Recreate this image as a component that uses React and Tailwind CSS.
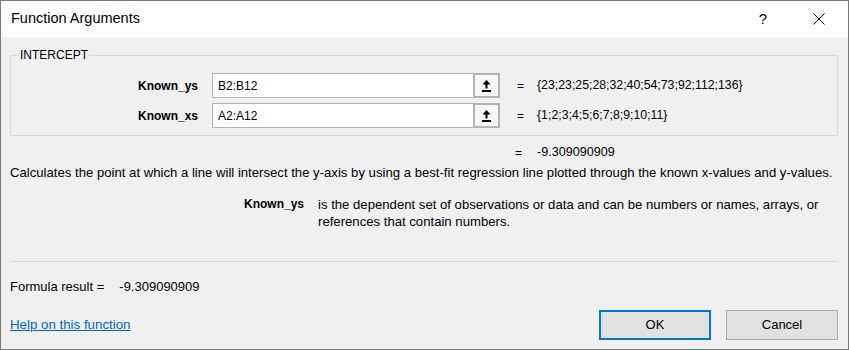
import React from 'react';

const UploadIcon = () => (
  <svg width="9" height="12" viewBox="0 0 9 12" fill="#000">
    <path d="M4.5 0 L8.5 4.5 H5.5 V8.5 H3.5 V4.5 H0.5 Z" />
    <rect x="0" y="10" width="9" height="2" />
  </svg>
);

function ArgRow({ label, value, result }) {
  return (
    <div className="flex items-center h-[25px]">
      <div className="w-[187px] text-right font-bold text-[12px]">{label}</div>
      <div className="ml-[14px] flex h-[25px]">
        <div className="w-[261px] h-full bg-white border border-[#b4b4b4] border-r-0 flex items-center pl-[5px] text-[12px]">
          {value}
        </div>
        <div className="w-[27px] h-full border-2 border-[#b4b4b4] bg-[#f7f7f7] flex items-center justify-center">
          <UploadIcon />
        </div>
      </div>
      <span className="ml-[17px] text-[12px]">=</span>
      <span className="ml-[13px] text-[12.3px]">{result}</span>
    </div>
  );
}

export default function App() {
  return (
    <div
      className="w-[849px] h-[350px] border border-[#7a7a7a] flex flex-col bg-[#f0f0f0] text-black"
      style={{ fontFamily: '"Liberation Sans", Arial, sans-serif' }}
    >
      {/* Title bar */}
      <div className="h-[36px] bg-white flex items-center pl-[10px] pr-[23px] shrink-0">
        <span className="text-[14.5px] flex-1">Function Arguments</span>
        <span className="text-[15px] mr-[46px]">?</span>
        <svg width="12" height="12" viewBox="0 0 12 12" stroke="#000" strokeWidth="1">
          <path d="M0.5 0.5 L11.5 11.5 M11.5 0.5 L0.5 11.5" />
        </svg>
      </div>

      <div className="flex-1 flex flex-col pl-[9px] pr-[10px]">
        {/* Group box */}
        <div className="relative mt-[18px] h-[81px] border border-[#dcdcdc]">
          <span className="absolute left-[8px] -top-[9px] px-[1px] bg-[#f0f0f0] text-[12px] leading-[16px]">
            INTERCEPT
          </span>
          <div className="mt-[17px] flex flex-col gap-[5px]">
            <ArgRow label="Known_ys" value="B2:B12" result="{23;23;25;28;32;40;54;73;92;112;136}" />
            <ArgRow label="Known_xs" value="A2:A12" result="{1;2;3;4;5;6;7;8;9;10;11}" />
          </div>
        </div>

        {/* Function result */}
        <div className="mt-[8px] h-[17px] flex items-center text-[12px]">
          <span className="ml-[505px]">=</span>
          <span className="ml-[15px] text-[12.6px]">-9.309090909</span>
        </div>

        <div className="mt-[3px] leading-[17px] text-[13.15px] whitespace-nowrap">
          Calculates the point at which a line will intersect the y-axis by using a best-fit regression line plotted through the known x-values and y-values.
        </div>

        <div className="mt-[15px] flex leading-[17px]">
          <div className="w-[294px] text-right font-bold text-[12px]">Known_ys</div>
          <div className="ml-[14px] w-[514px] text-[13.15px]">
            is the dependent set of observations or data and can be numbers or names, arrays, or references that contain numbers.
          </div>
        </div>

        <div className="mt-[31px] h-px bg-[#dadada]" />

        <div className="mt-[16px] h-[18px] flex items-center text-[13px]">
          <span>Formula result =</span>
          <span className="ml-[15px]">-9.309090909</span>
        </div>

        <div className="mt-[14px] flex items-center">
          <a href="#" className="text-[13.3px] text-[#0066cc] underline flex-1">Help on this function</a>
          <button className="w-[112px] h-[30px] bg-[#e1e1e1] border-2 border-[#0078d7] text-[13px]">OK</button>
          <button className="ml-[15px] w-[112px] h-[30px] bg-[#e1e1e1] border border-[#adadad] text-[13px]">Cancel</button>
        </div>
      </div>
    </div>
  );
}
